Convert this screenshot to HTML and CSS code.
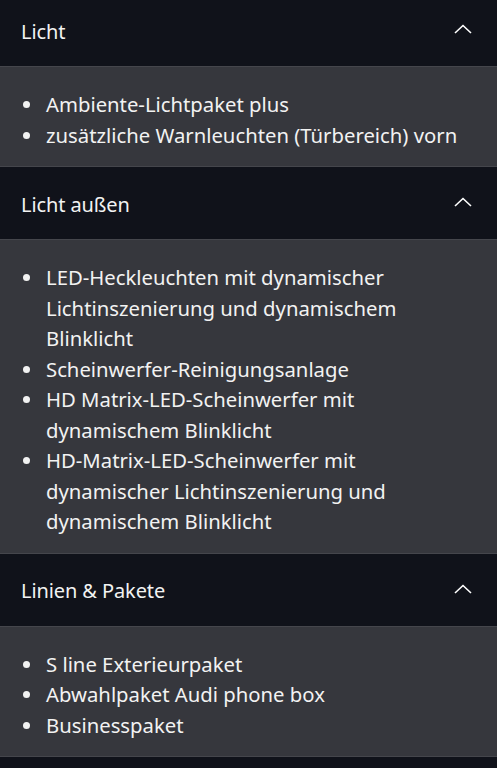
FILE: index.html
```html
<!DOCTYPE html>
<html lang="de">
<head>
    <meta charset="UTF-8">
    <meta name="viewport" content="width=device-width, initial-scale=1.0">
    <title>Ausstattung</title>
    <link rel="stylesheet" href="styles.css">
</head>
<body>
    <div class="equipment">
        <section class="group">
            <div class="group-header">
                <h2>Licht</h2>
                <svg class="chevron" width="18" height="10" viewBox="0 0 18 10"><path d="M1 9 L9 1.5 L17 9" fill="none" stroke="#fff" stroke-width="1.6"/></svg>
            </div>
            <ul class="group-list">
                <li>Ambiente-Lichtpaket plus</li>
                <li>zusätzliche Warnleuchten (Türbereich) vorn</li>
            </ul>
        </section>

        <section class="group">
            <div class="group-header">
                <h2>Licht außen</h2>
                <svg class="chevron" width="18" height="10" viewBox="0 0 18 10"><path d="M1 9 L9 1.5 L17 9" fill="none" stroke="#fff" stroke-width="1.6"/></svg>
            </div>
            <ul class="group-list">
                <li>LED-Heckleuchten mit dynamischer Lichtinszenierung und dynamischem Blinklicht</li>
                <li>Scheinwerfer-Reinigungsanlage</li>
                <li>HD Matrix-LED-Scheinwerfer mit dynamischem Blinklicht</li>
                <li>HD-Matrix-LED-Scheinwerfer mit dynamischer Lichtinszenierung und dynamischem Blinklicht</li>
            </ul>
        </section>

        <section class="group">
            <div class="group-header">
                <h2>Linien &amp; Pakete</h2>
                <svg class="chevron" width="18" height="10" viewBox="0 0 18 10"><path d="M1 9 L9 1.5 L17 9" fill="none" stroke="#fff" stroke-width="1.6"/></svg>
            </div>
            <ul class="group-list">
                <li>S line Exterieurpaket</li>
                <li>Abwahlpaket Audi phone box</li>
                <li>Businesspaket</li>
            </ul>
        </section>
    </div>
</body>
</html>
```

FILE: styles.css
```css
* {
    margin: 0;
    padding: 0;
    box-sizing: border-box;
}

body {
    background: #10121a;
    font-family: "Noto Sans", "Open Sans", sans-serif;
    color: #f2f2f2;
    overflow: hidden;
}

.equipment {
    margin-top: -6px;
}

.group-header {
    height: 72px;
    background: #10121a;
    display: flex;
    align-items: center;
    justify-content: space-between;
    padding: 2px 25px 0 21px;
}

.group-header h2 {
    font-size: 20px;
    font-weight: normal;
    letter-spacing: -0.1px;
}

.chevron {
    display: block;
    margin-top: -4px;
}

.group-list {
    list-style: none;
    background: #36373d;
    border-top: 1px solid #45464c;
    border-bottom: 1px solid #45464c;
    padding: 22px 24px 16px 46px;
    font-size: 20.3px;
    line-height: 30.5px;
}

.group-list li {
    position: relative;
}

.group-list li::before {
    content: "";
    position: absolute;
    left: -23px;
    top: 12px;
    width: 7px;
    height: 7px;
    border-radius: 50%;
    background: #f2f2f2;
}
```
